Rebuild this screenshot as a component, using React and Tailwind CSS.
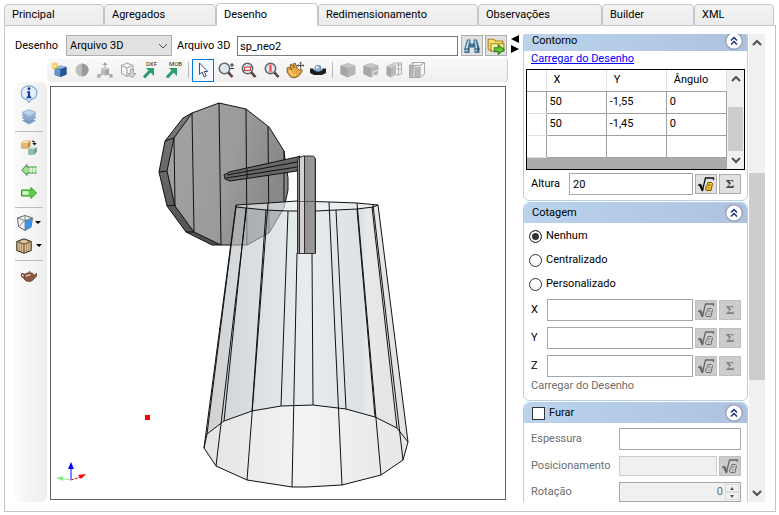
import React, { useState } from 'react';
import clsx from 'clsx';

const tabs = [
  { label: 'Principal', width: 'w-[100px]' },
  { label: 'Agregados', width: 'w-[112px]' },
  { label: 'Desenho', width: 'w-[102px]' },
  { label: 'Redimensionamento', width: 'w-[160px]' },
  { label: 'Observações', width: 'w-[124px]' },
  { label: 'Builder', width: 'w-[92px]' },
  { label: 'XML', width: 'w-[80px]' },
];

const contour = [
  ['50', '-1,55', '0'],
  ['50', '-1,45', '0'],
  ['', '', ''],
];

/* ---------- icons ---------- */

const Icon = ({ children, size = 'size-4' }) => (
  <svg viewBox="0 0 16 16" className={clsx(size, 'shrink-0')} fill="none" aria-hidden="true">
    {children}
  </svg>
);

const NewCubeIcon = () => (
  <Icon>
    <path d="M3.500 5.500 10 3.500l5.500 1.500v7.500L9.500 15 3.500 13z" fill="#3f78b8" />
    <path d="M3.500 5.500 10 3.500l5.500 1.500-6 2z" fill="#8fb9e2" />
    <path d="M9.500 7l6-2v7.500l-6 2.500z" fill="#24588f" />
    <path d="M4 6.500l5 1.500v6l-5-1.500z" fill="#5f98d3" />
    <path d="M4 0v8M0 4h8M1.200 1.200l5.600 5.600M6.800 1.200 1.200 6.800" stroke="#f2b72c" strokeWidth="1.200" />
    <circle cx="4" cy="4" r="1.600" fill="#fff3a0" />
  </Icon>
);

const SphereIcon = () => (
  <Icon>
    <circle cx="8" cy="8" r="6.500" fill="#bdbdbd" />
    <path d="M8 1.500a6.500 6.500 0 0 1 0 13z" fill="#9a9a9a" />
  </Icon>
);

const AxesBoxIcon = () => (
  <Icon>
    <path d="M8 0 5.500 3h2v4h1V3h2zM0 15.500l1-4 1 1.200L5 11l1 1-3 2 1 1.500zM16 15.500l-1-4-1 1.200L11 11l-1 1 3 2-1 1.500z" fill="#a2a2a2" />
    <path d="M4 6.500 8 5l4 1.500V12l-4 1.500L4 12z" fill="#bdbdbd" />
    <path d="M4 6.500 8 5l4 1.500L8 8z" fill="#d0d0d0" />
    <path d="M8 8l4-1.500V12l-4 1.500z" fill="#a6a6a6" />
  </Icon>
);

const BoxDownIcon = () => (
  <Icon>
    <path d="M1.500 3.500 7 1l6 2.500v8L7 14.500l-5.500-3zM1.500 3.500 7 6l6-2.500M7 6v8" stroke="#a0a0a0" />
    <path d="M10.500 7h3v4.500H16L12 16l-4-4.500h2.500z" fill="#d2d2d2" stroke="#9b9b9b" strokeWidth="0.800" />
  </Icon>
);

const ExportIcon = ({ text }) => (
  <svg viewBox="0 0 18 18" className="size-[18px] overflow-visible" aria-hidden="true">
    <path d="M2 16.500 8 10" stroke="#2a9d6e" strokeWidth="3" />
    <path d="M4 7h8v8z" fill="#2a9d6e" />
    <text x="4" y="5" fontSize="6" fill="#222">{text}</text>
  </svg>
);

const CursorIcon = () => (
  <Icon>
    <path d="M4.500 1v11.500L7.200 10l2 5 2-1-2-4.500h3.600z" fill="#fff" stroke="#35507f" />
  </Icon>
);

const LensIcon = ({ children }) => (
  <Icon>
    <path d="M10 10 14.500 15" stroke="#3c2b24" strokeWidth="2.600" />
    <path d="M11 10.500 14.500 14.500" stroke="#a8766a" strokeWidth="0.900" />
    <circle cx="6.500" cy="6.500" r="5.200" fill="#dce8ee" stroke="#666" strokeWidth="1.500" />
    {children}
  </Icon>
);

const ZoomIcon = () => (
  <LensIcon>
    <path d="M3.500 6a3 3 0 0 1 2.500-2.500" stroke="#fff" />
    <path d="M12 3h4M14 1v4M12 6.500h4" stroke="#222" strokeWidth="0.900" />
  </LensIcon>
);

const ZoomWindowIcon = () => (
  <LensIcon>
    <path d="M3.500 5h6v3.500h-6z" stroke="#c33c3c" />
    <path d="M2.500 8.500h1M9.500 5h1" stroke="#c33c3c" strokeWidth="2" />
  </LensIcon>
);

const ZoomExtentIcon = () => (
  <LensIcon>
    <path d="M6.500 2.500v8" stroke="#e64040" strokeWidth="2" />
    <path d="M4.500 3.500h4M4.500 9.500h4" stroke="#ef8a8a" />
  </LensIcon>
);

const HandIcon = () => (
  <Icon size="size-[18px]">
    <path
      d="M1 6.200 3 5.500 5 8 3.500 3.500l1.500-.8L7.200 6 6.600 2.400l1.600-.4L10 6.500l1.800 1.800 2-.8.700 1.500-3.500 4.500-4 1.500-3-1-3-4z"
      fill="#e7a944"
      stroke="#7b4d12"
      strokeWidth="0.800"
    />
    <path d="M3 8.500 5.500 12l3.500.5" stroke="#ffdc8e" />
    <path d="M13 1v6M10 4h6M12 2l1-1 1 1M11 3l-1 1 1 1M15 3l1 1-1 1" stroke="#444" strokeWidth="0.800" />
  </Icon>
);

const OrbitIcon = () => (
  <Icon>
    <path d="M0 6.500h3L5 9h6l2-2.500h3V11l-4 2H4l-4-2z" fill="#1d1d1d" />
    <circle cx="8" cy="6.500" r="3.200" fill="#86acdc" stroke="#4a6a9c" strokeWidth="0.600" />
    <circle cx="7.200" cy="5.500" r="1.400" fill="#e3eefc" />
  </Icon>
);

const GrayCubeIcon = ({ variant }) => (
  <Icon>
    {variant !== 'split' && variant !== 'grid' && (
      <>
        <path d="M.5 3.500 8 1l7.500 2.500v8.500L8 15.500.5 12z" fill="#b5b5b5" />
        <path d="M.5 3.500 8 6v9.500L.5 12z" fill="#a6a6a6" />
        <path d="M.5 3.500 8 1l7.500 2.500L8 6z" fill="#c6c6c6" />
      </>
    )}
    {variant === 'corner' && <path d="M10 14.500V10l5.500-2v5.500H10" stroke="#e9e9e9" />}
    {variant === 'split' && (
      <>
        <path d="M.5 4 5 5.500v10L.5 13z" fill="#a6a6a6" />
        <path d="M5 5.500 10 3v9.500l-5 3z" fill="#b9b9b9" />
        <path d="M.5 4 7 1l3 2-5 2.500z" fill="#cacaca" />
        <path d="M7 1h8.500v11L10 13.500M10.500 3h5M10.500 7h5M12.500 1v12" stroke="#b0b0b0" />
      </>
    )}
    {variant === 'grid' && (
      <>
        <path d="M.5 3.500h4v12h-4z" fill="#b3b3b3" />
        <path d="M6 5h5v10.500H6z" fill="#b9b9b9" />
        <path d="M.5 3.500 4 .5h11.500v11.500l-4.500 3.500H.5zM.5 3.500H11l4.500-3M11 3.500v12M6 3.500v12M4 .5v10" stroke="#a8a8a8" />
      </>
    )}
  </Icon>
);

const InfoIcon = () => (
  <Icon size="size-[18px]">
    <path d="M8 .8c4 0 7 2.500 7 6s-2.500 5.500-5.200 6L8 15.500l-1.800-2.700C3.500 12.300 1 10.200 1 6.800s3-6 7-6z" fill="#e2effa" stroke="#83aace" />
    <path d="M6.300 5.500H9v4.800h1v1.400H6v-1.400h1V6.900h-.7z" fill="#163d99" />
    <circle cx="8" cy="3.300" r="1.300" fill="#163d99" />
  </Icon>
);

const LayersIcon = () => (
  <Icon>
    <path d="M1 11.500 8 8.500l7 3L8 15.500z" fill="#7a9cc5" />
    <path d="M1 8.500 8 5.500l7 3L8 12.500z" fill="#8fb0d6" stroke="#6688b4" strokeWidth="0.600" />
    <path d="M1 5.700 8 2.700l7 3L8 9.700z" fill="#a5c2e2" stroke="#6688b4" strokeWidth="0.600" />
    <path d="M1 3.500 8 .5l7 3-7 4z" fill="#bdd3ec" stroke="#7695bf" strokeWidth="0.600" />
  </Icon>
);

const SwapBoxesIcon = () => (
  <Icon>
    <path d="M0 4 2.500 1.500h7V7L7 9.500H0z" fill="#c08a45" />
    <path d="M0 4 2.500 1.500h7L7 4z" fill="#f6dcae" />
    <path d="M0 4h7v5.500H0z" fill="#e2b574" />
    <path d="M7.500 10.500 9.500 8h6.200v5l-2.200 2.500h-6z" fill="#5f937f" />
    <path d="M7.500 10.500 9.500 8h6.200l-2.200 2.500z" fill="#c4e2d6" />
    <path d="M7.500 10.500h6v5h-6z" fill="#8fbdaa" />
    <path d="M11 2.500c1.500-.8 2.500 0 2.500 2" stroke="#222" strokeWidth="1.200" />
    <path d="M11.200 4h4.600l-2.300 2.600z" fill="#222" />
  </Icon>
);

const ArrowLeftIcon = () => (
  <Icon>
    <path d="M.8 8 6 2.500V5h9.500v6H6v2.500z" fill="#a6dc98" />
    <path d="M15.500 5H6V2.500L.8 8 6 13.500V11h9.500" stroke="#3b8a3b" />
    <path d="M10 5.500v5M13 5.500v5" stroke="#eefaea" strokeWidth="1.500" />
  </Icon>
);

const ArrowRightIcon = () => (
  <Icon>
    <path d="M15.500 8 10 2.500V5H.5v6H10v2.500z" fill="#62cf4a" stroke="#2b9a1c" />
    <path d="M1.500 6h6v4h-6z" fill="#d3f3c8" />
  </Icon>
);

const WireCubeIcon = () => (
  <Icon>
    <path d="M.5 3 8 .5 15.500 3 14 12l-6 3.500-6.500-4z" fill="#f3f6f9" stroke="#666" />
    <path d="M8 5.500 15.500 3 14 12l-6 3.500z" fill="#3f93ea" />
    <path d="M.5 3 8 5.500 15.500 3M8 5.500v10M8 .5V5L2 11.500" stroke="#777" strokeWidth="0.900" />
  </Icon>
);

const WoodCubeIcon = () => (
  <Icon>
    <path d="M.8 3.500 8 .8l7.200 2.700v9L8 15.200.8 12.500z" fill="#dcc198" stroke="#2d2115" />
    <path d="M.8 3.500 8 6.200l7.200-2.700M8 6.200v9" stroke="#4d3922" strokeWidth="0.900" />
    <path d="M3.200 5v8M5.600 6v8M10.500 6v8M12.800 5v8" stroke="#9b7d52" strokeWidth="0.800" />
  </Icon>
);

const TeapotIcon = () => (
  <Icon>
    <path d="M3.500 7C1.500 4.800 0 5.800.5 7.500S2.500 10 4 10.500" stroke="#6b3f2d" strokeWidth="1.200" />
    <path d="M3 6.500 6 5h5l2.500 2L16 5.500c0 2.500-1.500 4-3 5-.8 1.800-2.500 3-5 3s-4.500-1.200-5-3z" fill="#8d5842" stroke="#57301f" strokeWidth="0.700" />
    <path d="M7 4.500 8.500 3 10 4.500z" fill="#57301f" />
    <path d="M5 8.500C6 7 8 6.800 9.500 7" stroke="#ecc6b1" strokeWidth="1.500" />
  </Icon>
);

const BinocularsIcon = () => (
  <Icon>
    <path d="M3 1.500h3.500V5L8 6l1.500-1V1.500H13l2.500 8.500v5h-5V9.500h-5V15h-5v-5z" fill="#3d7296" />
    <path d="M4 2.500h1.500L4 8.500l-.5 5h-2v-3zM10.500 2.500h1.200l1.300 6v5h-1.500v-5z" fill="#c3deed" />
    <path d="M.5 11h5M10.500 11h5" stroke="#1d4560" />
  </Icon>
);

const FolderIcon = () => (
  <Icon size="size-[18px]">
    <path d="M1 2h5l1.500 1.500H14V12H2.500L1 10.500z" fill="#f7df6d" stroke="#a3861d" />
    <path d="M3.500 6H15v6.500H3.500z" fill="#fdf0a4" stroke="#a3861d" />
    <path d="M6.500 9.500H10V7l5.500 4.200L10 15.500V13H6.500z" fill="#68c43c" stroke="#2c7a1a" strokeWidth="0.900" />
  </Icon>
);

const RootIcon = ({ disabled }) => (
  <svg viewBox="0 0 18 18" className="size-[18px]" fill="none" aria-hidden="true">
    <path d="M1 10.500 3 9.500 5.500 15 8.500 3H16.500v2" stroke={disabled ? '#666' : '#111'} strokeWidth="1.300" />
    <path d="M3 9.500 5.700 15.500" stroke={disabled ? '#666' : '#111'} strokeWidth="2.400" />
    <path
      d="M10 9.500 11 7.500h3.500l1 1L14 15.500H9.500L8.500 14l.8-3 1.200-1h3"
      fill={disabled ? '#cccccc' : '#fdc52b'}
      stroke={disabled ? '#707070' : '#6d4f05'}
    />
    <path d="M11 13.500l1.500-1" stroke={disabled ? '#707070' : '#6d4f05'} />
  </svg>
);

const CollapseIcon = () => (
  <svg viewBox="0 0 18 18" className="size-[18px]" fill="none" aria-hidden="true">
    <circle cx="9" cy="9" r="8.300" fill="#fff" stroke="#9aa1b8" strokeWidth="1.400" />
    <path d="M6 8.500l3-3 3 3M6 12.500l3-3 3 3" stroke="#1c2f7c" strokeWidth="1.500" />
  </svg>
);

const Chevron = ({ up, light }) => (
  <svg viewBox="0 0 10 10" className="size-[10px]" fill="none" aria-hidden="true">
    <path d={up ? 'M1 7l4-4 4 4' : 'M1 3l4 4 4-4'} stroke="#505050" strokeWidth={light ? 1 : 2} />
  </svg>
);

/* ---------- 3D view ---------- */

const LampDrawing = () => (
  <svg viewBox="51 87 454 412" preserveAspectRatio="xMinYMin meet" className="h-full w-full" fill="none">
    <title>Arquivo 3D</title>
    <defs>
      <linearGradient id="plate" x1="0" x2="1" y1="0" y2="0.300">
        <stop offset="0" stopColor="#a3a3a3" />
        <stop offset="0.600" stopColor="#9b9b9b" />
        <stop offset="1" stopColor="#888888" />
      </linearGradient>
      <linearGradient id="rim" x1="0" x2="0" y1="0" y2="1">
        <stop offset="0" stopColor="#7b7b7b" />
        <stop offset="1" stopColor="#4f4f4f" />
      </linearGradient>
      <linearGradient id="post" x1="0" x2="1" y1="0" y2="0">
        <stop offset="0" stopColor="#8c8a8a" />
        <stop offset="1" stopColor="#9d9b9b" />
      </linearGradient>
      <linearGradient id="glass" x1="0" x2="1" y1="0" y2="0">
        <stop offset="0" stopColor="#b0b2b4" stopOpacity="0.600" />
        <stop offset="0.250" stopColor="#c2c9ce" stopOpacity="0.600" />
        <stop offset="0.500" stopColor="#d6dfe4" stopOpacity="0.600" />
        <stop offset="0.770" stopColor="#c6cdd2" stopOpacity="0.600" />
        <stop offset="0.800" stopColor="#d9d9db" stopOpacity="0.600" />
        <stop offset="1" stopColor="#cfcfd0" stopOpacity="0.600" />
      </linearGradient>
      <linearGradient id="base" x1="0" x2="1" y1="0" y2="0">
        <stop offset="0" stopColor="#e4e4e6" />
        <stop offset="0.500" stopColor="#f2f4f6" />
        <stop offset="1" stopColor="#e6e6e8" />
      </linearGradient>
    </defs>

    {/* wall plate */}
    <g stroke="#111" strokeLinejoin="round">
      <path d="M192 113 183 118 165 141 159 172 167 206 186 232 212 245h9l60-60z" fill="url(#rim)" />
      <path d="M219 103 246 109 269 127 284 151 285 159 288 178 288 190 284 208 269 233 247 245H221L194 232 175 206 167 171 174 138 192 113z" fill="url(#plate)" />
      <path d="M165 141l9-3M159 172l8-1M167 206l8-1M186 232h8M174 138l1 68M192 113l2 119M219 103l2 142M246 109l1 136M268 127l1 106M284 151v57" />
    </g>

    {/* glass shade */}
    <path d="M236 205 268 203 297 201 330 202 357 203 378 205 408 442 397 428 375 417 346 409 313 405 281 406 252 411 224 421 207 434 204 448z" fill="url(#glass)" />
    <path d="M236 205 268 203 297 201 330 202 357 203 378 205 357 209 336 210H288l-22 0-20-2z" fill="#fff" fillOpacity="0.350" />
    <path d="M204 448 207 434 224 421 252 411 281 406 313 405 346 409 375 417 397 428 408 442 403 460 381 475 342 485 306 487H292L247 480 216 466z" fill="url(#base)" />
    <g stroke="#111" strokeWidth="1">
      <path d="M236 205 268 203 297 201 330 202 357 203 378 205 373 207 357 209 336 210 316 211H288L266 210 246 208 236 207z" />
      <path d="M236 205 204 448 216 466 247 480 292 487H306L342 485 381 475 403 460 408 442 378 205" />
      <path d="M204 448 207 434 224 421 252 411 281 406 313 405 346 409 375 417 397 428 408 442" />
      <path d="M236 207 207 434M246 208 224 421M247 204 216 466M266 210 252 411M268 203 247 480M288 211 281 406M297 253 292 487M312 253l1 152M329 202l13 283M336 210l10 199M357 203l24 272M357 209l18 208M372 207l25 221M373 205l30 255" />
    </g>

    {/* arm */}
    <g stroke="#111">
      <path d="M229 172 297 157l3-1-3 15-67 10-5-2-1-4z" fill="#686868" />
      <path d="M227 175l70-13M226 178l71-11M247 169v9" />
    </g>

    {/* post */}
    <path d="M297 159l5-3h11l3 3v94h-19z" fill="url(#post)" />
    <path d="M300 158v95h4v-97z" fill="#d5d1d1" />
    <path d="M315 158v95" stroke="#555" />
    <path d="M297.500 159l5-3h11l2 3v94.500h-18zM299.500 158v95M304.500 156v97" stroke="#222" strokeWidth="0.900" />
    <path d="M297 201.500h19" stroke="#333" strokeWidth="0.700" />

    {/* reference point and axes */}
    <path d="M145 415h5v5h-5z" fill="#f00" />
    <path d="M71 480v-14" stroke="#00f" />
    <path d="M71 462l3 7h-6z" fill="#00f" />
    <path d="M71 480l10-3" stroke="#f00" strokeDasharray="3 1" />
    <path d="M86 474l-5 5-3-4z" fill="#f00" />
    <path d="M71 480l-12-2" stroke="#8ee68e" />
    <path d="M56 478l7-2v5z" fill="#8ee68e" />
  </svg>
);

/* ---------- small controls ---------- */

const ToolButton = ({ label, active, disabled, children, className }) => (
  <button
    type="button"
    aria-label={label}
    disabled={disabled}
    className={clsx(
      'flex h-[23px] items-center justify-center',
      active ? 'w-[22px] border border-[#0078d7] bg-[#f5f9fd]' : 'w-[23px]',
      className
    )}
  >
    {children}
  </button>
);

const SquareButton = ({ label, disabled, children }) => (
  <button
    type="button"
    aria-label={label}
    disabled={disabled}
    className={clsx(
      'flex h-5 w-[22px] shrink-0 items-center justify-center border font-["Liberation_Serif",serif] text-[13px] font-bold',
      disabled ? 'border-[#bfbfbf] bg-[#cccccc] text-[#808080]' : 'border-[#adadad] bg-[#e1e1e1] text-[#444]'
    )}
  >
    {children}
  </button>
);

const Panel = ({ title, children, className }) => (
  <section className="shrink-0 rounded-md border border-[#b5cfea] bg-white">
    <header className="flex h-5 items-center justify-between rounded-t-md bg-linear-to-r from-[#bbd3ec] to-[#adc2de] pr-1 pl-2">
      <div className="flex items-center">{title}</div>
      <button type="button" aria-label="Recolher">
        <CollapseIcon />
      </button>
    </header>
    <div className={clsx('flex flex-col', className)}>{children}</div>
  </section>
);

const FormulaField = ({ label, labelWidth, value = '', disabled }) => (
  <div className="flex h-[22px] items-center gap-[2px] pr-[6px] pl-[7px]">
    <label htmlFor={`campo-${label}`} className={labelWidth}>{label}</label>
    <input
      id={`campo-${label}`}
      type="text"
      defaultValue={value}
      disabled={disabled}
      className="h-[22px] min-w-0 flex-1 border border-[#a5a7ae] bg-white px-[3px]"
    />
    <SquareButton label={`Fórmula ${label}`} disabled={disabled}><RootIcon disabled={disabled} /></SquareButton>
    <SquareButton label={`Somatório ${label}`} disabled={disabled}>Σ</SquareButton>
  </div>
);

const ContourTable = () => (
  <div className="mx-[2px] flex h-[101px] border border-black bg-[#ababab]">
    <div className="min-w-0 flex-1">
      <table className="w-full table-fixed border-collapse bg-white">
        <thead>
          <tr className="h-[21px]">
            <th scope="col" aria-label="Linha" className="w-[19px] border-r border-b border-r-[#e2e2e2] border-b-[#a0a0a0]" />
            {['X', 'Y', 'Ângulo'].map((name) => (
              <th key={name} scope="col" className="border-r border-b border-r-[#e2e2e2] border-b-[#a0a0a0] p-0 pl-[7px] text-left font-normal">
                {name}
              </th>
            ))}
          </tr>
        </thead>
        <tbody>
          {contour.map((row, i) => (
            <tr key={i} className="h-[22px]">
              <th className="border-r border-b border-r-[#a0a0a0] border-b-[#e2e2e2]" />
              {row.map((cell, j) => (
                <td key={j} className="border-r border-b border-[#a0a0a0] p-0 pl-[3px]">{cell}</td>
              ))}
            </tr>
          ))}
        </tbody>
      </table>
    </div>
    <div className="flex w-[17px] flex-col items-center bg-[#f0f0f0] pt-1 pb-1">
      <Chevron up />
      <div className="mt-[23px] mb-auto h-11 w-[15px] bg-[#cdcdcd]" />
      <Chevron />
    </div>
  </div>
);

const Separator = ({ vertical }) => (
  <span
    className={clsx(
      'shrink-0 bg-[#bdbdbd]',
      vertical ? 'mx-[3px] h-4 w-px' : 'my-[3px] h-px w-7'
    )}
  />
);

/* ---------- page ---------- */

const ViewerArea = () => (
  <div className="flex min-w-0 flex-1 flex-col">
    <div className="flex h-6 items-start">
      <label htmlFor="desenho" className="w-[52px] shrink-0 pt-[5px] pl-px">Desenho</label>
      <div className="relative mt-px w-[106px] shrink-0">
        <select id="desenho" className="h-[21px] w-full appearance-none border border-[#adadad] bg-[#e1e1e1] pl-[3px]">
          <option>Arquivo 3D</option>
        </select>
        <span className="pointer-events-none absolute top-[6px] right-1"><Chevron light /></span>
      </div>
      <label htmlFor="arquivo" className="w-[65px] shrink-0 pt-[5px] pl-[5px]">Arquivo 3D</label>
      <input
        id="arquivo"
        type="text"
        defaultValue="sp_neo2"
        className="mt-[2px] h-5 min-w-0 flex-1 border border-[#7a7a7a] bg-white px-[2px]"
      />
      <div className="mt-px ml-[3px] flex gap-[2px] pr-px">
        <button type="button" aria-label="Procurar" className="flex h-[21px] w-[22px] items-center justify-center border border-[#adadad] bg-[#e1e1e1]">
          <BinocularsIcon />
        </button>
        <button type="button" aria-label="Abrir" className="flex h-[21px] w-[22px] items-center justify-center border border-[#adadad] bg-[#e1e1e1]">
          <FolderIcon />
        </button>
      </div>
    </div>

    <div className="ml-[33px] flex h-6 items-center rounded-sm border-r border-[#c8c8c8] bg-linear-to-b from-[#fafafa] to-[#efefef]">
      <ToolButton label="Novo 3D"><NewCubeIcon /></ToolButton>
      <ToolButton label="Esfera" disabled><SphereIcon /></ToolButton>
      <ToolButton label="Eixos" disabled><AxesBoxIcon /></ToolButton>
      <ToolButton label="Importar" disabled><BoxDownIcon /></ToolButton>
      <ToolButton label="Exportar DXF"><ExportIcon text="DXF" /></ToolButton>
      <ToolButton label="Exportar MOB"><ExportIcon text="MOB" /></ToolButton>
      <Separator vertical />
      <ToolButton label="Selecionar" active><CursorIcon /></ToolButton>
      <ToolButton label="Zoom"><ZoomIcon /></ToolButton>
      <ToolButton label="Zoom janela"><ZoomWindowIcon /></ToolButton>
      <ToolButton label="Zoom extensão"><ZoomExtentIcon /></ToolButton>
      <ToolButton label="Mover"><HandIcon /></ToolButton>
      <ToolButton label="Orbitar"><OrbitIcon /></ToolButton>
      <Separator vertical />
      <ToolButton label="Vista sólida" disabled><GrayCubeIcon /></ToolButton>
      <ToolButton label="Vista de canto" disabled><GrayCubeIcon variant="corner" /></ToolButton>
      <ToolButton label="Vista dividida" disabled><GrayCubeIcon variant="split" /></ToolButton>
      <ToolButton label="Vista em grade" disabled><GrayCubeIcon variant="grid" /></ToolButton>
    </div>

    <div className="flex min-h-0 flex-1">
      <div className="flex w-[33px] shrink-0 flex-col items-center rounded-md bg-linear-to-r from-[#fbfbfb] to-[#eeeeee] pr-[3px]">
        <ToolButton label="Informações"><InfoIcon /></ToolButton>
        <ToolButton label="Camadas"><LayersIcon /></ToolButton>
        <Separator />
        <ToolButton label="Trocar peças"><SwapBoxesIcon /></ToolButton>
        <ToolButton label="Anterior"><ArrowLeftIcon /></ToolButton>
        <ToolButton label="Próximo"><ArrowRightIcon /></ToolButton>
        <Separator />
        <ToolButton label="Modo de exibição" className="w-[30px] gap-[2px]">
          <WireCubeIcon />
          <span className="border-x-3 border-t-3 border-x-transparent border-t-black" />
        </ToolButton>
        <ToolButton label="Material" className="w-[30px] gap-1">
          <WoodCubeIcon />
          <span className="border-x-3 border-t-3 border-x-transparent border-t-black" />
        </ToolButton>
        <Separator />
        <ToolButton label="Renderizar"><TeapotIcon /></ToolButton>
      </div>
      <div className="mt-1 mr-[2px] mb-[2px] ml-[3px] min-w-0 flex-1 overflow-hidden border border-[#646464] bg-white">
        <LampDrawing />
      </div>
    </div>
  </div>
);

const Sidebar = () => {
  const [dimension, setDimension] = useState('Nenhum');

  return (
    <aside className="flex w-[242px] shrink-0 overflow-hidden">
      <div className="-mt-1 flex min-w-0 flex-1 flex-col gap-px">
        <Panel title="Contorno" className="pb-[5px]">
          <a href="#contorno" className="h-[18px] pl-[7px] leading-4 text-[#0000ff] underline">Carregar do Desenho</a>
          <ContourTable />
          <div className="mt-[3px]">
            <FormulaField label="Altura" labelWidth="w-9" value="20" />
          </div>
        </Panel>

        <Panel title="Cotagem" className="pb-[5px]">
          <div className="flex flex-col pt-px pb-[3px]" role="radiogroup" aria-label="Cotagem">
            {['Nenhum', 'Centralizado', 'Personalizado'].map((option) => (
              <label key={option} className="flex h-6 items-center gap-1 pl-[5px]">
                <input
                  type="radio"
                  name="cotagem"
                  checked={dimension === option}
                  onChange={() => setDimension(option)}
                  className="size-[13px] appearance-none rounded-full border border-[#333] bg-white checked:bg-[#333] checked:shadow-[inset_0_0_0_2px_white]"
                />
                {option}
              </label>
            ))}
          </div>
          <div className="flex flex-col gap-[6px]">
            <FormulaField label="X" labelWidth="w-[14px]" disabled />
            <FormulaField label="Y" labelWidth="w-[14px]" disabled />
            <FormulaField label="Z" labelWidth="w-[14px]" disabled />
          </div>
          <span className="h-[18px] pl-[7px] leading-[18px] text-[#6d6d6d]">Carregar do Desenho</span>
        </Panel>

        <Panel
          title={
            <label className="flex items-center gap-1">
              <input type="checkbox" className="size-[13px] appearance-none border border-[#333] bg-white" />
              Furar
            </label>
          }
          className="gap-[6px] pt-[5px] pr-[6px] pb-1 pl-[7px] text-[#6d6d6d]"
        >
          <div className="flex items-center">
            <label htmlFor="espessura" className="w-[88px]">Espessura</label>
            <input id="espessura" type="text" className="h-[22px] min-w-0 flex-1 border border-[#a5a7ae] bg-white px-1" />
          </div>
          <div className="flex items-center">
            <label htmlFor="posicionamento" className="w-[88px]">Posicionamento</label>
            <input id="posicionamento" type="text" disabled className="mr-[2px] h-5 min-w-0 flex-1 border border-[#cccccc] bg-[#f0f0f0] px-1" />
            <SquareButton label="Fórmula posicionamento" disabled><RootIcon disabled /></SquareButton>
          </div>
          <div className="flex items-center">
            <label htmlFor="rotacao" className="w-[88px]">Rotação</label>
            <div className="flex h-5 min-w-0 flex-1 border border-[#a5a7ae] bg-[#f0f0f0] p-px">
              <input id="rotacao" type="text" disabled defaultValue="0" className="min-w-0 flex-1 bg-transparent pr-[2px] text-right" />
              <div className="flex w-[14px] flex-col">
                <button type="button" aria-label="Aumentar" disabled className="flex flex-1 items-center justify-center border border-[#dcdcdc]">
                  <span className="border-x-2 border-b-3 border-x-transparent border-b-[#555]" />
                </button>
                <button type="button" aria-label="Diminuir" disabled className="flex flex-1 items-center justify-center border border-[#dcdcdc]">
                  <span className="border-x-2 border-t-3 border-x-transparent border-t-[#555]" />
                </button>
              </div>
            </div>
          </div>
        </Panel>
      </div>

      <div className="ml-px flex w-4 shrink-0 flex-col items-center bg-[#f0f0f0] pt-1 pb-1">
        <Chevron up />
        <div className="mt-[125px] mb-auto h-[207px] w-full bg-[#cdcdcd]" />
        <Chevron />
      </div>
    </aside>
  );
};

const App = () => {
  const [activeTab, setActiveTab] = useState('Desenho');

  return (
    <main className="flex h-screen flex-col bg-white pt-[3px] pr-[3px] pb-[3px] pl-1 font-['Roboto','Liberation_Sans',sans-serif] text-[11px] leading-[14px] text-black">
      <div role="tablist" className="flex h-[23px] shrink-0 items-end">
        {tabs.map((tab) => (
          <button
            key={tab.label}
            type="button"
            role="tab"
            aria-selected={activeTab === tab.label}
            onClick={() => setActiveTab(tab.label)}
            className={clsx(
              'shrink-0 rounded-t-sm border border-[#c6c6c6] pl-[7px] text-left',
              tab.width,
              activeTab === tab.label
                ? 'h-[23px] border-b-white bg-white'
                : 'h-[22px] bg-linear-to-b from-[#f3f3f3] to-[#ececec]'
            )}
          >
            {tab.label}
          </button>
        ))}
        <span className="flex-1 border-b border-[#c6c6c6]" />
      </div>

      <div className="flex min-h-0 flex-1 border-x border-b border-[#c6c6c6] pt-2 pr-[10px] pb-[9px] pl-[9px]">
        <ViewerArea />
        <div className="flex w-[15px] shrink-0 flex-col items-start gap-[2px] pt-px pl-[3px]">
          <button type="button" aria-label="Recolher painel" className="border-y-4 border-r-8 border-y-transparent border-r-black" />
          <button type="button" aria-label="Expandir painel" className="border-y-4 border-l-8 border-y-transparent border-l-black" />
        </div>
        <Sidebar />
      </div>
    </main>
  );
};

export default App;
